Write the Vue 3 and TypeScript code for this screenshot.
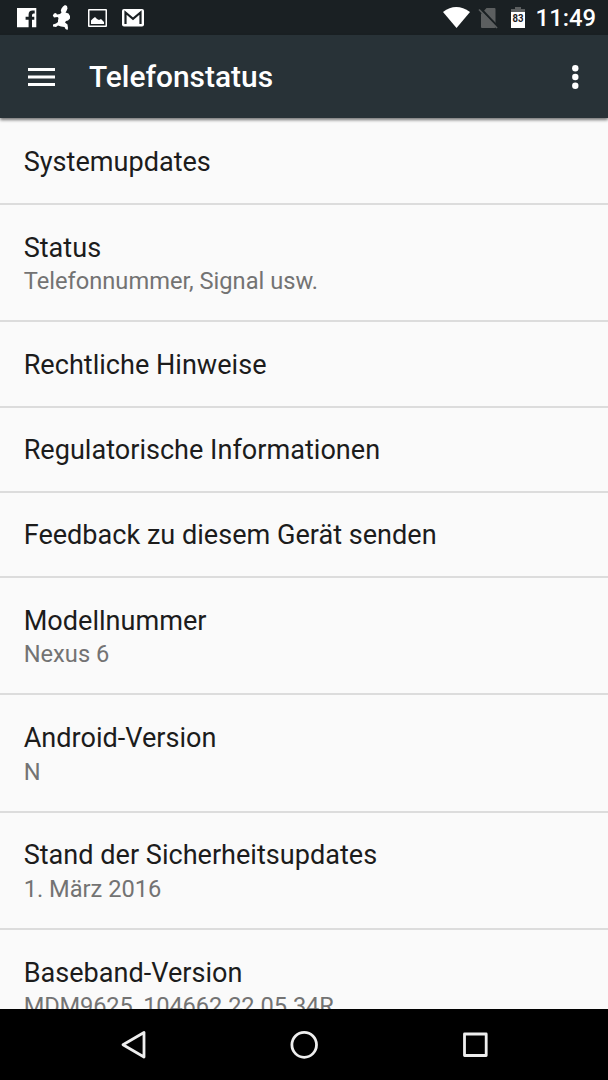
<script setup lang="ts">
interface Item { title: string; summary?: string }
const items: Item[] = [
  { title: 'Systemupdates' },
  { title: 'Status', summary: 'Telefonnummer, Signal usw.' },
  { title: 'Rechtliche Hinweise' },
  { title: 'Regulatorische Informationen' },
  { title: 'Feedback zu diesem Gerät senden' },
  { title: 'Modellnummer', summary: 'Nexus 6' },
  { title: 'Android-Version', summary: 'N' },
  { title: 'Stand der Sicherheitsupdates', summary: '1. März 2016' },
  { title: 'Baseband-Version', summary: 'MDM9625_104662.22.05.34R' },
]
</script>

<template>
  <div class="screen">
    <header class="status">
      <svg class="icons" width="608" height="35" viewBox="0 0 608 35">
        <path fill="#fff" d="M17 8h19.300v19.300H32v-7.500h2.300v-3H32v-1.600q0-1.600 1.600-1.600h1.100v-3h-2.200q-3.900 0-3.900 4v2.200h-3v3h3v7.500H17z" />
        <path fill="#fff" d="M61.500 8.500L63 6.500L65 5L67 6L67.500 8.500L66.500 11L65.500 12.500L68.500 13.500L70 16L70 18.500L68 20.500L66 21L65 22.500L67.500 24.500L68 28L67.500 30L65.500 29L64.500 27L61 26.500L58 25.500L56 27L53 26.500L53 24.500L56 23.500L58 22L58 20.500L58.500 18L57.500 17L54 17.500L52.800 15.500L54 13.500L56 13L57 14.500L60 14L61.500 12.500L60.800 10.500z" />
        <path fill="#fff" fill-rule="evenodd" d="M89 9h17q1 0 1 1v16q0 1-1 1H89q-1 0-1-1V10q0-1 1-1zM89.500 10.500v15h16v-15z" />
        <path fill="#fff" d="M91 24v-3.500l2-2 2-1.500 2 2 2 1 2-1 3 3v2z" />
        <rect x="122" y="9" width="22" height="17.500" rx="2" fill="#fff" />
        <path fill="none" stroke="#1a2023" stroke-width="2.200" d="M125.500 24V12.500l7.500 6.300 7.500-6.300V24" />
        <path fill="#fff" d="M443 12Q456 2 470 12L456.500 28z" />
        <path fill="#5c5f60" d="M482 13l4.500-5h8q1 0 1 1v18q0 1-1 1H482q-1 0-1-1V14z" />
        <path stroke="#1a2023" stroke-width="2.500" d="M480.500 8.500l17 18" /><path stroke="#5c5f60" stroke-width="1.700" d="M479 9.500l18 18.500" />
        <path fill="#5c5f60" d="M515 7h6v2h4v3h-14V9h4z" /><path fill="#fff" d="M511 12h14v16h-14z" />
        <text x="512.500" y="22" textLength="11" lengthAdjust="spacingAndGlyphs" class="battery">83</text>
      </svg>
      <span class="clock">11:49</span>
    </header>
    <div class="toolbar">
      <svg width="28" height="20" viewBox="0 0 28 20"><path stroke="#fff" stroke-width="3" d="M0 2.500h27M0 10h27M0 17.500h27" /></svg>
      <h1>Telefonstatus</h1>
      <svg width="8" height="24" viewBox="0 0 8 24" fill="#fff"><circle cx="4.300" cy="3.300" r="3.200" /><circle cx="4.300" cy="12" r="3.200" /><circle cx="4.300" cy="20.700" r="3.200" /></svg>
    </div>
    <main>
      <section v-for="item in items" :key="item.title" :class="{ double: item.summary }">
        <div class="title">{{ item.title }}</div>
        <div v-if="item.summary" class="summary">{{ item.summary }}</div>
      </section>
    </main>
    <nav>
      <svg width="608" height="71" viewBox="0 1009 608 71" fill="none" stroke="#eee" stroke-width="2.800" stroke-linejoin="round">
        <path d="M144 1032.500v24.500l-21-12.200z" /><ellipse cx="304.200" cy="1044.800" rx="12.300" ry="12.500" /><path d="M464.500 1034h21.700v21.500h-21.700z" />
      </svg>
    </nav>
  </div>
</template>

<style>
body { margin: 0; overflow: hidden; }
</style>
<style scoped>
.screen { width: 608px; height: 1080px; display: flex; flex-direction: column; overflow: hidden; background: #fafafa; font-family: Roboto, sans-serif; }
.status { height: 35px; flex: none; background: #1a2023; position: relative; color: #fff; }
.icons { display: block; }
.battery { font: 700 11.5px Roboto, sans-serif; fill: #1a2023; }
.clock { position: absolute; right: 12px; top: 4px; font-size: 23.800px; line-height: 28px; font-weight: 500; }
.toolbar { height: 83px; flex: none; box-sizing: border-box; background: #283237; display: flex; align-items: center; padding: 0 29px 0 28px; color: #fff; box-shadow: 0 2px 3px #0008; z-index: 1; }
h1 { margin: 0 auto 0 33px; font-size: 29.900px; font-weight: 500; line-height: 36px; }
main { flex: 1; min-height: 0; overflow: hidden; padding-top: 1.800px; }
section { box-sizing: border-box; height: 85.200px; padding: 24.700px 24px 0 23.700px; border-bottom: 2px solid #dcdcdc; white-space: nowrap; }
section.double { height: 117.400px; }
.title { font-size: 27.080px; line-height: 36px; color: #1c1c1c; }
.summary { margin-top: -0.500px; font-size: 23.670px; line-height: 32px; color: #737373; }
section:last-child .summary { letter-spacing: -0.150px; }
nav { height: 71px; flex: none; background: #000; }
nav svg { display: block; }
</style>
